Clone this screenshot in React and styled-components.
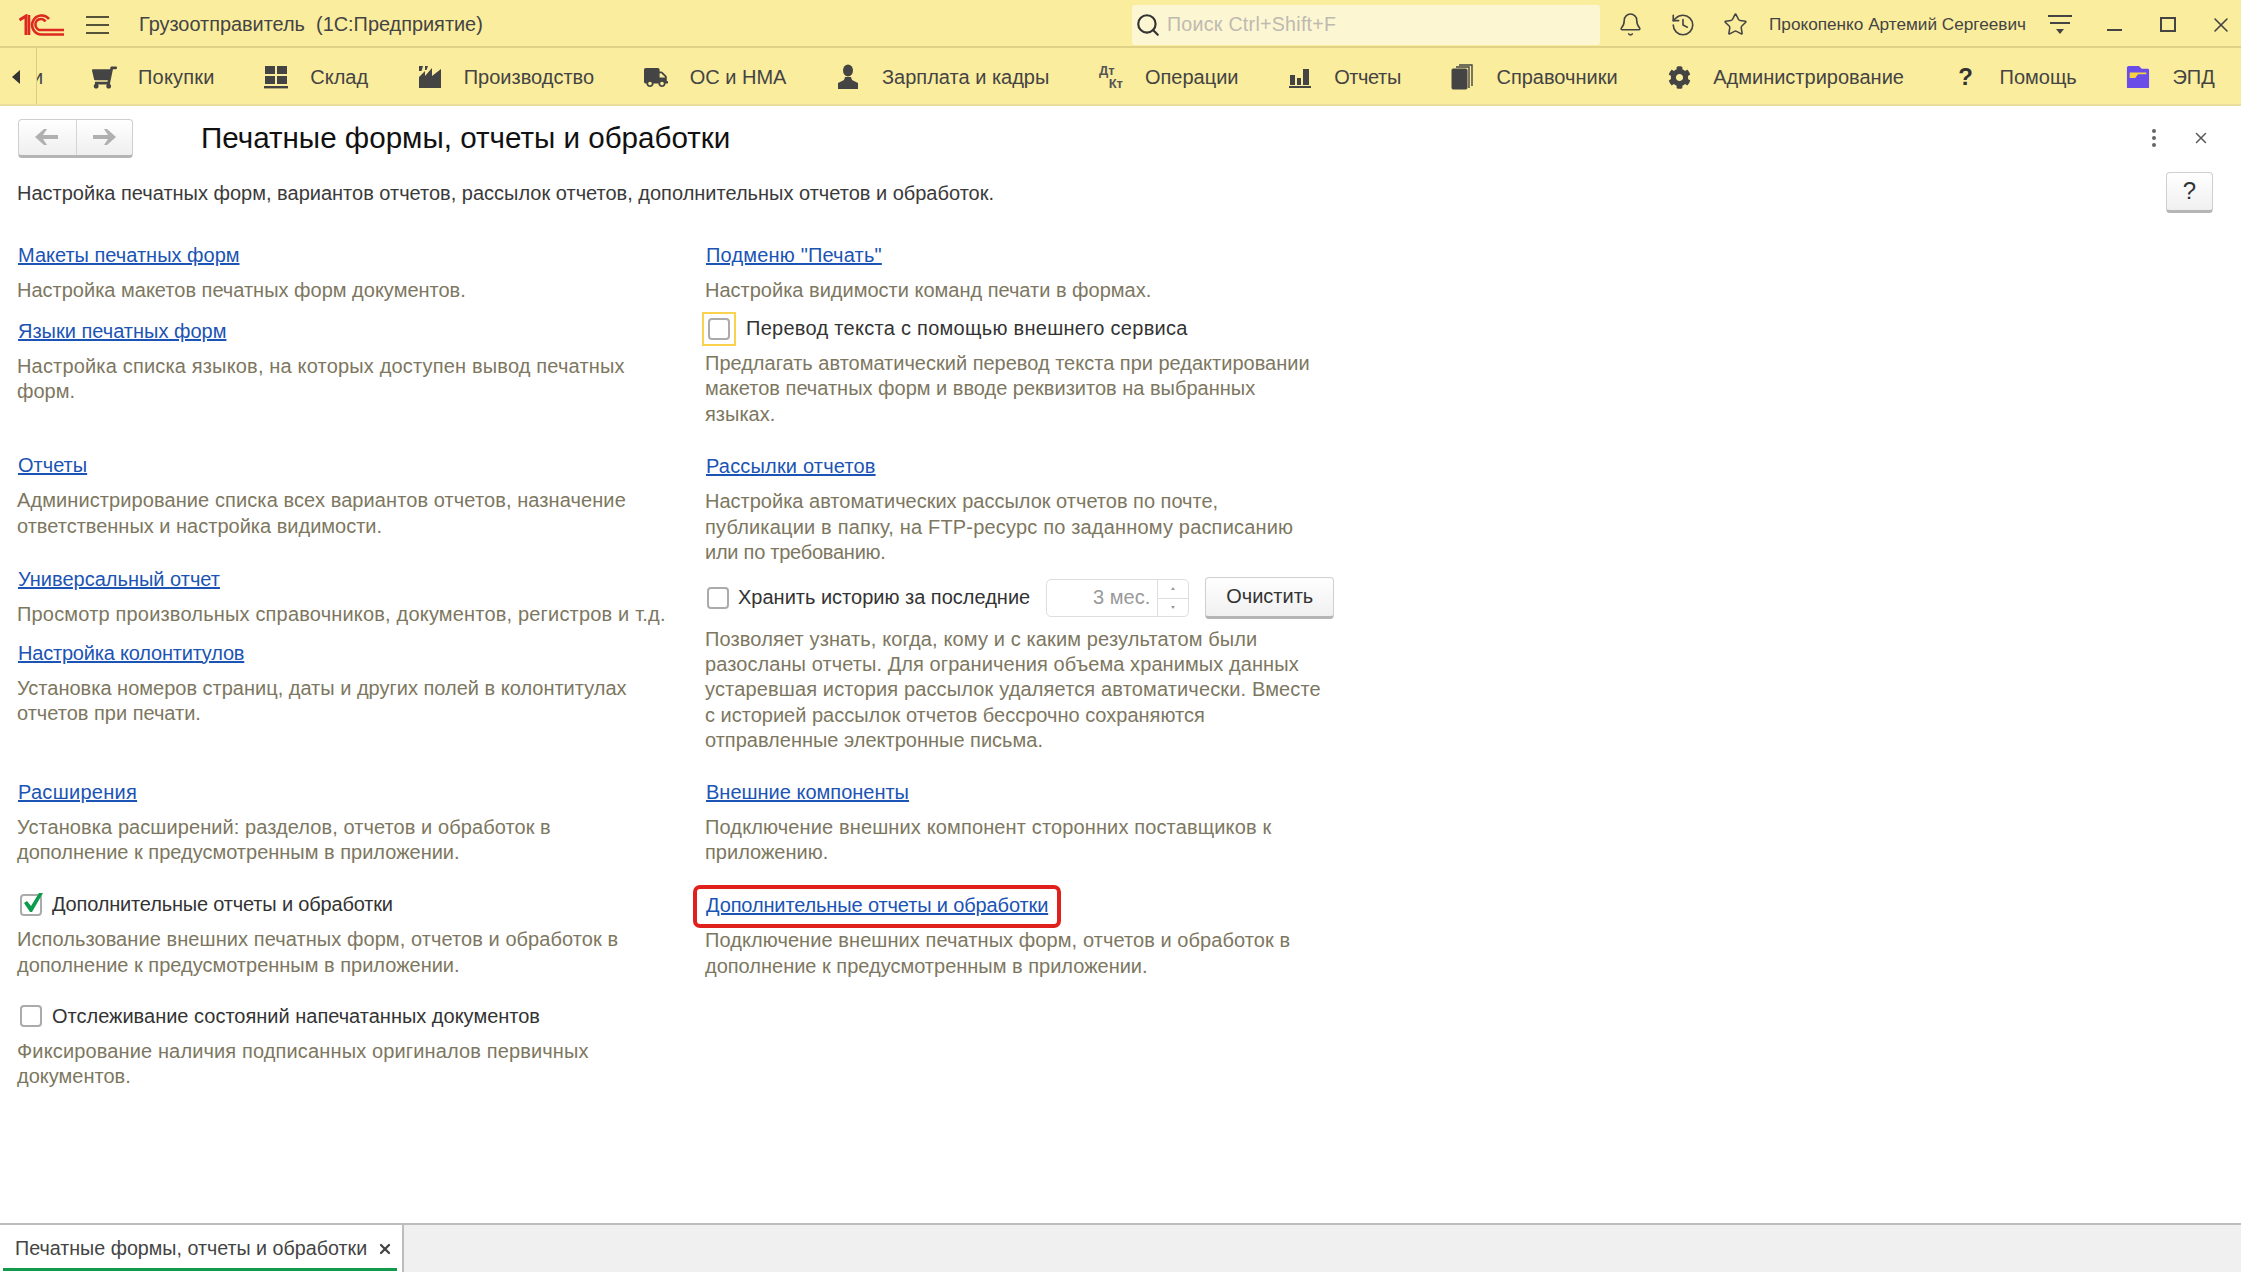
import React from 'react';
import styled, { createGlobalStyle } from 'styled-components';
import { Bell, History, Star, Search, X } from 'lucide-react';
import { FaShoppingCart, FaTruck, FaCog } from 'react-icons/fa';

const GlobalStyle = createGlobalStyle`
  html, body { margin: 0; padding: 0; background: #fff; }
  body { font-family: "Liberation Sans", Arial, sans-serif; }
  a { text-decoration: underline; }
`;

const Page = styled.div`
  width: 2241px;
  height: 1272px;
  display: flex;
  flex-direction: column;
  overflow: hidden;
  color: #333;
  font-size: 20px;
`;

const TopBar = styled.header`
  height: 48px;
  flex: none;
  box-sizing: border-box;
  display: flex;
  align-items: center;
  background: #fbed9e;
  border-bottom: 2px solid #e0d388;
  padding: 3px 0 0 19px;
  color: #444;
`;

const Burger = styled.div`
  width: 23px;
  height: 18px;
  margin-left: 22px;
  border-top: 2px solid #55523a;
  border-bottom: 2px solid #55523a;
  box-sizing: border-box;
  display: flex;
  align-items: center;
  &::before { content: ''; display: block; width: 100%; height: 2px; background: #55523a; }
`;

const AppTitle = styled.div`
  margin-left: 30px;
  font-size: 19.9px;
  white-space: pre;
`;

const SearchBox = styled.div`
  margin-left: auto;
  width: 468px;
  height: 40px;
  background: #fdf6d3;
  border-radius: 3px;
  display: flex;
  align-items: center;
  gap: 6px;
  padding-left: 3px;
  box-sizing: border-box;
  color: #bdbab0;
  font-size: 19.6px;
  letter-spacing: 0.28px;
  svg { color: #333; flex: none; }
`;

const TopIcons = styled.div`
  display: flex;
  align-items: center;
  gap: 27px;
  margin-left: 18px;
  width: 130px;
  color: #444;
`;

const UserName = styled.div`
  margin-left: 21px;
  width: 258px;
  font-size: 17.2px;
  white-space: nowrap;
`;

const WindowButtons = styled.div`
  display: flex;
  align-items: center;
  margin-left: 21px;
  color: #444;
`;

const IconSlot = styled.span`
  display: flex;
  align-items: center;
  justify-content: center;
  width: ${p => p.$w}px;
  margin-left: ${p => p.$ml || 0}px;
  flex: none;
`;

const Nav = styled.nav`
  height: 58px;
  flex: none;
  box-sizing: border-box;
  display: flex;
  align-items: center;
  background: #fbed9e;
  border-bottom: 2px solid #e8dd9c;
  color: #444;
  overflow: hidden;
`;

const NavBack = styled.div`
  width: 37px;
  height: 100%;
  flex: none;
  border-right: 1px solid #d9cd85;
  display: flex;
  align-items: center;
  padding: 2px 0 0 12px;
  box-sizing: border-box;
  &::before {
    content: '';
    border-right: 8px solid #333;
    border-top: 7px solid transparent;
    border-bottom: 7px solid transparent;
  }
`;

const NavClipped = styled.div`
  width: 55px;
  flex: none;
  overflow: hidden;
  padding-top: 2px;
  text-indent: -5px;
`;

const NavList = styled.div`
  display: flex;
  align-items: center;
  gap: 49.6px;
  padding-top: 2px;
`;

const NavItem = styled.div`
  display: flex;
  align-items: center;
  gap: 22px;
  white-space: nowrap;
  font-size: 20px;
  letter-spacing: ${p => p.$ls || 0}px;
`;

const NavIcon = styled.span`
  width: 24px;
  height: 28px;
  display: flex;
  align-items: center;
  justify-content: center;
  flex: none;
  color: #444;
  letter-spacing: 0;
`;

const DebitCredit = styled.span`
  display: flex;
  flex-direction: column;
  width: 24px;
  font-size: 13px;
  line-height: 13px;
  font-weight: bold;
  color: #555;
  span:last-child { text-align: right; }
`;

const Content = styled.main`
  flex: 1;
  min-height: 0;
  background: #fff;
`;

const FormHeader = styled.div`
  margin-top: 12px;
  height: 40px;
  display: flex;
  align-items: center;
  padding: 0 31px 0 18px;
`;

const NavButtons = styled.div`
  width: 115px;
  height: 39px;
  box-sizing: border-box;
  display: grid;
  grid-template-columns: 1fr 1fr;
  border: 1px solid #cfcfcf;
  border-bottom: 3px solid #b5b5b5;
  border-radius: 4px;
  background: linear-gradient(#fff, #efefef);
  color: #aaa;
  span {
    display: flex;
    align-items: center;
    justify-content: center;
  }
  span + span { border-left: 1px solid #d5d5d5; }
`;

const FormTitle = styled.h1`
  margin: 0 0 0 68px;
  font-size: 29.6px;
  font-weight: normal;
  color: #111;
  white-space: nowrap;
`;

const HeaderTools = styled.div`
  margin-left: auto;
  display: flex;
  align-items: center;
  gap: 36px;
  color: #555;
`;

const Dots = styled.div`
  display: flex;
  flex-direction: column;
  gap: 3px;
  i { display: block; width: 4px; height: 4px; border-radius: 50%; background: #666; }
`;

const InfoRow = styled.div`
  margin-top: 14px;
  height: 40px;
  display: flex;
  align-items: center;
  justify-content: space-between;
  padding: 0 28px 0 17px;
`;

const InfoText = styled.div`
  padding-top: 2px;
  font-size: 20px;
  color: #3a3a3a;
`;

const SoftButton = styled.button`
  width: ${p => p.$w}px;
  height: ${p => p.$h}px;
  margin-left: ${p => p.$ml || 0}px;
  padding: 0;
  flex: none;
  font-family: inherit;
  font-size: ${p => p.$size || 20}px;
  color: #333;
  border: 1px solid #cfcfcf;
  border-bottom: 3px solid #b5b5b5;
  border-radius: 4px;
  background: linear-gradient(#fff, #f0f0f0);
`;

const Columns = styled.div`
  margin-top: 30.5px;
  display: grid;
  grid-template-columns: 688px 660px;
  padding-left: 17px;
`;

const Column = styled.div`
  display: flex;
  flex-direction: column;
  align-items: flex-start;
`;

const Link = styled.a`
  position: relative;
  display: block;
  margin-top: ${p => p.$mt || 0}px;
  margin-left: 1px;
  height: 25px;
  line-height: 25px;
  font-size: 20px;
  letter-spacing: ${p => p.$ls || 0}px;
  color: #1b54b4;
  white-space: nowrap;
  ${p => p.$marked && `
    &::after {
      content: '';
      position: absolute;
      inset: -8px -13px -10px -13px;
      border: 4px solid #e0201c;
      border-radius: 7px;
    }
  `}
`;

const Hint = styled.p`
  margin: ${p => p.$mt ?? 10}px 0 0;
  font-size: 20px;
  line-height: 25.3px;
  color: #7d775f;
  white-space: nowrap;
`;

const Line = styled.span`
  display: block;
  letter-spacing: ${p => p.$ls || 0}px;
`;

const CheckRow = styled.label`
  display: flex;
  align-items: center;
  gap: ${p => p.$gap}px;
  margin-top: ${p => p.$mt || 0}px;
  margin-left: ${p => p.$ml || 0}px;
  height: 25px;
  font-size: 20px;
  letter-spacing: ${p => p.$ls || 0}px;
  color: #333;
  white-space: nowrap;
`;

const Box = styled.span`
  position: relative;
  width: 22px;
  height: 22px;
  flex: none;
  box-sizing: border-box;
  border: 2px solid #ababab;
  border-radius: 4px;
  background: #fff;
  ${p => p.$focus && `
    &::before {
      content: '';
      position: absolute;
      inset: -8px;
      border: 2px solid #f9d24f;
    }
  `}
  svg { position: absolute; left: 1px; top: -3px; }
`;

const HistoryRow = styled.div`
  display: flex;
  align-items: center;
  margin-top: 11.6px;
  height: 42px;
`;

const SpinInput = styled.div`
  margin-left: 16px;
  width: 143px;
  height: 38px;
  box-sizing: border-box;
  border: 1px solid #dedede;
  border-radius: 5px;
  display: grid;
  grid-template-columns: 110px 1fr;
  color: #999;
`;

const SpinValue = styled.span`
  display: flex;
  align-items: center;
  justify-content: flex-end;
  padding-right: 7px;
  font-size: 20px;
`;

const SpinArrows = styled.span`
  display: grid;
  grid-template-rows: 1fr 1fr;
  border-left: 1px solid #dedede;
  span {
    display: flex;
    align-items: center;
    justify-content: center;
    &::before {
      content: '';
      border-left: 2px solid transparent;
      border-right: 2px solid transparent;
    }
  }
  span:first-child::before { border-bottom: 3px solid #999; }
  span:last-child {
    border-top: 1px solid #dedede;
    &::before { border-top: 3px solid #999; }
  }
`;

const TabBar = styled.footer`
  height: 49px;
  flex: none;
  box-sizing: border-box;
  display: flex;
  background: #f0f0f0;
  border-top: 2px solid #bdbdbd;
`;

const Tab = styled.div`
  width: 404px;
  box-sizing: border-box;
  background: #fff;
  border-right: 2px solid #bdbdbd;
  display: flex;
  align-items: center;
  padding: 0 9px 0 15px;
  font-size: 19.7px;
  color: #444;
  white-space: nowrap;
  position: relative;
  svg { margin-left: auto; color: #444; }
  &::after {
    content: '';
    position: absolute;
    left: 3px;
    right: 5px;
    bottom: 1px;
    height: 3px;
    background: #109a49;
  }
`;

function Logo() {
  return (
    <svg width="45" height="22" viewBox="0 0 45 22" fill="none" stroke="#dd2a20" strokeWidth="2.6">
      <path d="M0.5 6 L7 2 V21" strokeWidth="3" />
      <path d="M10 1 V21" strokeWidth="2.6" />
      <path d="M30 5 A9.5 9.5 0 1 0 22.5 20.5 H45" />
      <path d="M26.5 7.5 A5.5 5.5 0 1 0 22.5 16 H45" />
    </svg>
  );
}

function MenuFilter() {
  return (
    <svg width="24" height="22" viewBox="0 0 24 22" fill="#444">
      <rect x="0" y="1" width="24" height="2" />
      <rect x="2" y="8" width="20" height="2" />
      <path d="M8 15 H16 L12 20 Z" />
    </svg>
  );
}

function WarehouseIcon() {
  return (
    <svg width="24" height="24" viewBox="0 0 24 24" fill="#444">
      <rect x="1" y="1" width="10" height="8" />
      <rect x="13" y="1" width="10" height="8" />
      <rect x="1" y="11" width="10" height="8" />
      <rect x="13" y="11" width="10" height="8" />
      <rect x="0" y="21" width="24" height="2.4" />
    </svg>
  );
}

function FactoryIcon() {
  return (
    <svg width="24" height="24" viewBox="0 0 24 24" fill="#444">
      <path d="M1 1 H5 L3.5 6 H1 Z" />
      <path d="M7 1 H10 L8.5 5 H7 Z" />
      <path d="M1 23 V12 L7 6 V11 L14 3 V11 L23 4 V23 Z" />
    </svg>
  );
}

function PersonIcon() {
  return (
    <svg width="22" height="26" viewBox="0 0 22 26" fill="#444">
      <ellipse cx="11" cy="6.5" rx="5" ry="6" />
      <path d="M8 13 H14 L15 16 L21 19 V25 H1 V19 L7 16 Z" />
    </svg>
  );
}

function BarsIcon() {
  return (
    <svg width="22" height="22" viewBox="0 0 22 22" fill="#444">
      <rect x="1" y="9" width="5" height="10" />
      <rect x="8" y="12" width="4" height="7" />
      <rect x="14" y="3" width="6" height="16" />
      <rect x="0" y="20" width="22" height="2" />
    </svg>
  );
}

function PagesIcon() {
  return (
    <svg width="22" height="26" viewBox="0 0 22 26" fill="none" stroke="#444">
      <rect x="1" y="5" width="15" height="20" rx="1" fill="#444" />
      <path d="M18 24 V3 H5" strokeWidth="1.4" />
      <path d="M21 22 V1 H8" strokeWidth="1.4" />
    </svg>
  );
}

function FolderIcon() {
  return (
    <svg width="26" height="26" viewBox="0 0 26 26">
      <path d="M1 3 Q1 1 3 1 H14 L17 4 H24 Q25 4 25 6 V24 Q25 25 24 25 H2 Q1 25 1 24 Z" fill="#6a4de8" />
      <path d="M4 8 H22 V10 H13 L10 14 H4 Z" fill="#f7d23e" />
    </svg>
  );
}

const QuestionGlyph = styled.b`
  font-size: 24px;
  color: #333;
`;

const FlipX = styled.span`
  display: flex;
  transform: ${p => (p.$on ? 'scaleX(-1)' : 'none')};
`;

function Arrow({ flip }) {
  return (
    <FlipX $on={flip}>
      <svg width="24" height="18" viewBox="0 0 24 18" fill="#b0b0b0">
        <path d="M0 9 L9 1 H12 L8 7 H23 V11 H8 L12 17 H9 Z" />
      </svg>
    </FlipX>
  );
}

const navItems = [
  { label: 'Покупки', ls: 0.2, icon: <FlipX $on><FaShoppingCart size={25} /></FlipX> },
  { label: 'Склад', icon: <WarehouseIcon /> },
  { label: 'Производство', icon: <FactoryIcon /> },
  { label: 'ОС и НМА', icon: <FaTruck size={25} /> },
  { label: 'Зарплата и кадры', icon: <PersonIcon /> },
  {
    label: 'Операции',
    icon: (
      <DebitCredit>
        <span>Дт</span>
        <span>Кт</span>
      </DebitCredit>
    ),
  },
  { label: 'Отчеты', ls: -0.4, icon: <BarsIcon /> },
  { label: 'Справочники', icon: <PagesIcon /> },
  { label: 'Администрирование', icon: <FaCog size={23} /> },
  { label: 'Помощь', icon: <QuestionGlyph>?</QuestionGlyph> },
  { label: 'ЭПД', icon: <FolderIcon /> },
];

function Check({ checked, focus, gap, mt, ml, ls, children }) {
  return (
    <CheckRow $gap={gap} $mt={mt} $ml={ml} $ls={ls}>
      <Box $focus={focus}>
        {checked && (
          <svg width="20" height="20" viewBox="0 0 20 20" fill="#0a9c4c">
            <path d="M1 10 L4 8 L8 13 L16 0 H20 L9 19 H7 Z" />
          </svg>
        )}
      </Box>
      {children}
    </CheckRow>
  );
}

export default function App() {
  return (
    <Page>
      <GlobalStyle />
      <TopBar>
        <Logo />
        <Burger />
        <AppTitle>Грузоотправитель  (1С:Предприятие)</AppTitle>
        <SearchBox>
          <Search size={26} strokeWidth={2} />
          Поиск Ctrl+Shift+F
        </SearchBox>
        <TopIcons>
          <Bell size={25} strokeWidth={1.5} />
          <History size={26} strokeWidth={1.5} />
          <Star size={25} strokeWidth={1.5} />
        </TopIcons>
        <UserName>Прокопенко Артемий Сергеевич</UserName>
        <WindowButtons>
          <MenuFilter />
          <IconSlot $w={42} $ml={21}>
            <svg width="15" height="14" viewBox="0 0 15 14"><rect y="11" width="15" height="2" fill="#444" /></svg>
          </IconSlot>
          <IconSlot $w={65}>
            <svg width="16" height="15" viewBox="0 0 16 15" fill="none" stroke="#444" strokeWidth="2"><rect x="1" y="1" width="14" height="13" /></svg>
          </IconSlot>
          <IconSlot $w={41}>
            <X size={24} strokeWidth={1.6} />
          </IconSlot>
        </WindowButtons>
      </TopBar>
      <Nav>
        <NavBack />
        <NavClipped>и</NavClipped>
        <NavList>
          {navItems.map(item => (
            <NavItem key={item.label} $ls={item.ls}>
              <NavIcon>{item.icon}</NavIcon>
              {item.label}
            </NavItem>
          ))}
        </NavList>
      </Nav>
      <Content>
        <FormHeader>
          <NavButtons>
            <span><Arrow /></span>
            <span><Arrow flip /></span>
          </NavButtons>
          <FormTitle>Печатные формы, отчеты и обработки</FormTitle>
          <HeaderTools>
            <Dots><i /><i /><i /></Dots>
            <X size={18} strokeWidth={2} />
          </HeaderTools>
        </FormHeader>
        <InfoRow>
          <InfoText>Настройка печатных форм, вариантов отчетов, рассылок отчетов, дополнительных отчетов и обработок.</InfoText>
          <SoftButton $w={47} $h={41} $size={24}>?</SoftButton>
        </InfoRow>
        <Columns>
          <Column>
            <Link>Макеты печатных форм</Link>
            <Hint>Настройка макетов печатных форм документов.</Hint>
            <Link $mt={16}>Языки печатных форм</Link>
            <Hint>
              <Line $ls={0.17}>Настройка списка языков, на которых доступен вывод печатных</Line>
              <Line>форм.</Line>
            </Hint>
            <Link $mt={49}>Отчеты</Link>
            <Hint>
              <Line $ls={0.095}>Администрирование списка всех вариантов отчетов, назначение</Line>
              <Line>ответственных и настройка видимости.</Line>
            </Hint>
            <Link $mt={28}>Универсальный отчет</Link>
            <Hint>
              <Line $ls={0.18}>Просмотр произвольных справочников, документов, регистров и т.д.</Line>
            </Hint>
            <Link $mt={13.6} $ls={-0.2}>Настройка колонтитулов</Link>
            <Hint>
              <Line>Установка номеров страниц, даты и других полей в колонтитулах</Line>
              <Line>отчетов при печати.</Line>
            </Hint>
            <Link $mt={53.6} $ls={0.28}>Расширения</Link>
            <Hint>
              <Line $ls={0.08}>Установка расширений: разделов, отчетов и обработок в</Line>
              <Line>дополнение к предусмотренным в приложении.</Line>
            </Hint>
            <Check checked gap={10} mt={26.6} ml={3} ls={-0.17}>Дополнительные отчеты и обработки</Check>
            <Hint>
              <Line $ls={0.075}>Использование внешних печатных форм, отчетов и обработок в</Line>
              <Line>дополнение к предусмотренным в приложении.</Line>
            </Hint>
            <Check gap={10} mt={26} ml={3}>Отслеживание состояний напечатанных документов</Check>
            <Hint>
              <Line $ls={0.135}>Фиксирование наличия подписанных оригиналов первичных</Line>
              <Line>документов.</Line>
            </Hint>
          </Column>
          <Column>
            <Link $ls={0.18}>Подменю "Печать"</Link>
            <Hint>Настройка видимости команд печати в формах.</Hint>
            <Check focus gap={16} mt={13.6} ml={3} ls={0.28}>Перевод текста с помощью внешнего сервиса</Check>
            <Hint $mt={9.6}>
              <Line>Предлагать автоматический перевод текста при редактировании</Line>
              <Line>макетов печатных форм и вводе реквизитов на выбранных</Line>
              <Line>языках.</Line>
            </Hint>
            <Link $mt={27.4} $ls={0.18}>Рассылки отчетов</Link>
            <Hint>
              <Line>Настройка автоматических рассылок отчетов по почте,</Line>
              <Line $ls={0.18}>публикации в папку, на FTP-ресурс по заданному расписанию</Line>
              <Line $ls={-0.25}>или по требованию.</Line>
            </Hint>
            <HistoryRow>
              <Check gap={9} ml={2}>Хранить историю за последние</Check>
              <SpinInput>
                <SpinValue>3 мес.</SpinValue>
                <SpinArrows><span /><span /></SpinArrows>
              </SpinInput>
              <SoftButton $w={129} $h={42} $ml={16}>Очистить</SoftButton>
            </HistoryRow>
            <Hint $mt={8}>
              <Line $ls={0.13}>Позволяет узнать, когда, кому и с каким результатом были</Line>
              <Line $ls={0.08}>разосланы отчеты. Для ограничения объема хранимых данных</Line>
              <Line $ls={0.145}>устаревшая история рассылок удаляется автоматически. Вместе</Line>
              <Line>с историей рассылок отчетов бессрочно сохраняются</Line>
              <Line>отправленные электронные письма.</Line>
            </Hint>
            <Link $mt={26.6}>Внешние компоненты</Link>
            <Hint>
              <Line $ls={0.135}>Подключение внешних компонент сторонних поставщиков к</Line>
              <Line>приложению.</Line>
            </Hint>
            <Link $mt={28} $marked $ls={-0.13}>Дополнительные отчеты и обработки</Link>
            <Hint>
              <Line $ls={0.08}>Подключение внешних печатных форм, отчетов и обработок в</Line>
              <Line>дополнение к предусмотренным в приложении.</Line>
            </Hint>
          </Column>
        </Columns>
      </Content>
      <TabBar>
        <Tab>
          Печатные формы, отчеты и обработки
          <X size={16} strokeWidth={3.4} />
        </Tab>
      </TabBar>
    </Page>
  );
}
